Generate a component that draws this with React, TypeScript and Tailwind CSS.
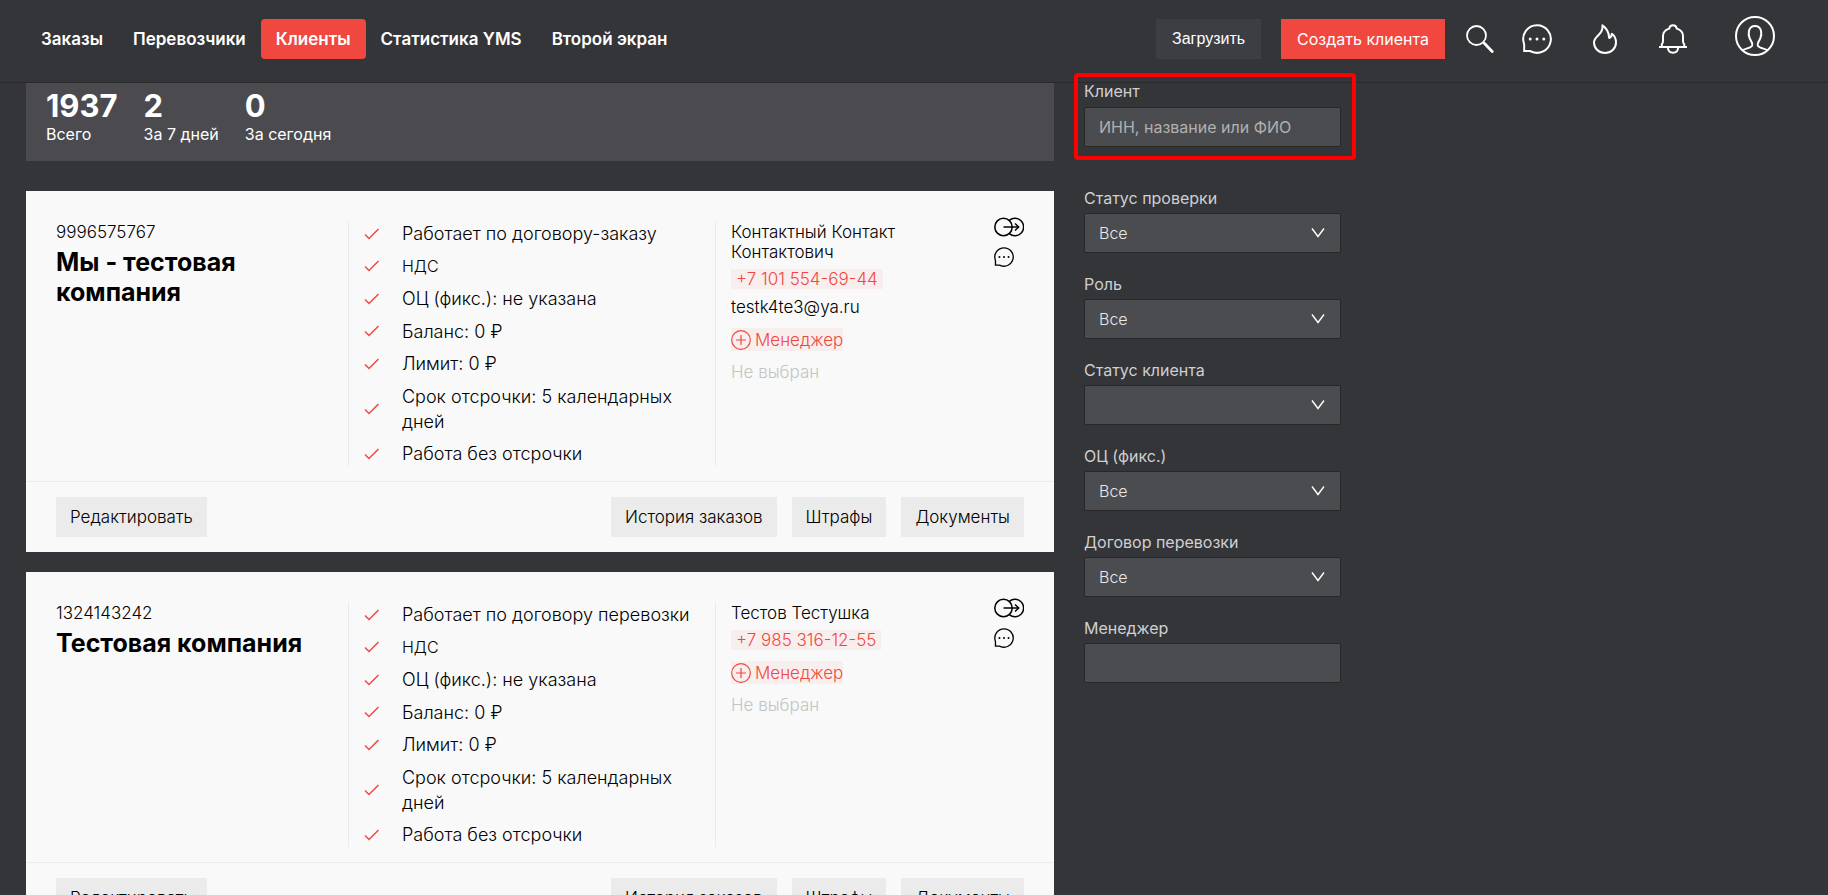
import { useState } from "react";
import type { ReactNode } from "react";

type Client = {
  inn: string;
  name: string;
  terms: string[];
  contact: string;
  phone: string;
  email?: string;
};

const navItems = [
  { label: "Заказы", href: "#orders" },
  { label: "Перевозчики", href: "#carriers" },
  { label: "Клиенты", href: "#clients" },
  { label: "Статистика YMS", href: "#yms" },
  { label: "Второй экран", href: "#screen" }
];

const stats = [
  { value: "1937", label: "Всего" },
  { value: "2", label: "За 7 дней" },
  { value: "0", label: "За сегодня" }
];

const commonTerms = [
  "НДС",
  "ОЦ (фикс.): не указана",
  "Баланс: 0 ₽",
  "Лимит: 0 ₽",
  "Срок отсрочки: 5 календарных дней",
  "Работа без отсрочки"
];

const clients: Client[] = [
  {
    inn: "9996575767",
    name: "Мы - тестовая компания",
    terms: ["Работает по договору-заказу", ...commonTerms],
    contact: "Контактный Контакт Контактович",
    phone: "+7 101 554-69-44",
    email: "testk4te3@ya.ru"
  },
  {
    inn: "1324143242",
    name: "Тестовая компания",
    terms: ["Работает по договору перевозки", ...commonTerms],
    contact: "Тестов Тестушка",
    phone: "+7 985 316-12-55"
  }
];

const filters = [
  { id: "check", label: "Статус проверки", value: "Все" },
  { id: "role", label: "Роль", value: "Все" },
  { id: "status", label: "Статус клиента", value: "" },
  { id: "fix", label: "ОЦ (фикс.)", value: "Все" },
  { id: "contract", label: "Договор перевозки", value: "Все" }
];

function SearchIcon() {
  return (
    <svg aria-hidden width="28" height="28" viewBox="0 0 28 28" fill="none" stroke="currentColor">
      <circle cx="10.5" cy="10.5" r="9.5" strokeWidth="1.8" />
      <path d="M17.2 17.2 19 19" strokeWidth="2" />
      <path d="m18.8 18.8 7.4 7.6" strokeWidth="2.8" strokeLinecap="round" />
    </svg>
  );
}

function ChatIcon({ size }: { size: number }) {
  return (
    <svg aria-hidden width={size} height={size} viewBox="0 0 30 30" fill="none">
      <path
        d="M15 1.2a13.8 13.8 0 1 1-5.8 26.3l-.9-.4H2.2V21l-.3-1.7A13.8 13.8 0 0 1 15 1.2Z"
        stroke="currentColor"
        strokeWidth="2"
      />
      <circle cx="8.2" cy="15" r="1.5" fill="currentColor" />
      <circle cx="15" cy="15" r="1.5" fill="currentColor" />
      <circle cx="21.8" cy="15" r="1.5" fill="currentColor" />
    </svg>
  );
}

function FlameIcon() {
  return (
    <svg aria-hidden width="26" height="30" viewBox="-1 0 26 30" fill="none">
      <path
        d="M9.4 1.4c.6 4.2-.8 6.6-3.6 9.4C3 13.4 1 15.5 1 18.6 1 24.5 6 29 12 29s11-4.5 11-10.4c0-3.6-1.4-6.8-4.2-8.8-.1 2.3-.8 3.8-2.6 4.3C16 9.5 14 4.4 9.4 1.4Z"
        stroke="currentColor"
        strokeWidth="2"
        strokeLinejoin="round"
      />
    </svg>
  );
}

function BellIcon() {
  return (
    <svg aria-hidden width="30" height="30" viewBox="0 0 30 30" fill="none" stroke="currentColor" strokeWidth="2">
      <path d="M1 23h28" />
      <path d="M3.8 22.5v-2.2c.8-.8 1.2-1.8 1.2-3.3V12c0-3.600 2.200-6.200 6.200-7.400.3-2 1.700-3.400 3.800-3.400s3.500 1.400 3.800 3.400C22.800 5.800 25 8.400 25 12v5c0 1.500.4 2.500 1.200 3.300v2.200" />
      <path d="M9.8 23.5c.3 3.3 2.4 5.3 5.2 5.3s4.9-2 5.2-5.3" />
    </svg>
  );
}

function UserIcon() {
  return (
    <svg aria-hidden width="40" height="40" viewBox="0 0 40 40" fill="none" stroke="currentColor" strokeWidth="2">
      <circle cx="20" cy="20" r="19" />
      <path d="M7.5 34.2c3-1.7 8.8-2.2 9.7-4.7.9-2.6-1.4-4.3-2.6-7.3-1.4-3.4-2-12.2 5.4-12.2s6.8 8.8 5.4 12.2c-1.2 3-3.5 4.7-2.6 7.3.9 2.5 6.7 3 9.7 4.7" />
    </svg>
  );
}

function TransferIcon() {
  return (
    <svg aria-hidden width="30" height="20" viewBox="0 0 30 20" fill="none" stroke="currentColor" strokeWidth="1.5">
      <circle cx="9.5" cy="10" r="8.7" />
      <path d="M15.3 3.4a8.7 8.7 0 1 1 0 13.2" />
      <path d="M9.5 10h15" />
      <path d="m21 6.5 3.7 3.5-3.7 3.5" />
    </svg>
  );
}

function CheckIcon() {
  return (
    <svg aria-hidden className="shrink-0 text-[#f0483f]" width="16" height="12" viewBox="0 0 16 12" fill="none">
      <path d="m1 6.5 4 4L14.5 1" stroke="currentColor" strokeWidth="1.5" />
    </svg>
  );
}

function PlusIcon() {
  return (
    <svg aria-hidden width="20" height="20" viewBox="0 0 20 20" fill="none" stroke="currentColor" strokeWidth="1.2">
      <circle cx="10" cy="10" r="9.3" />
      <path d="M10 5v10M5 10h10" />
    </svg>
  );
}

function IconButton({ label, children }: { label: string; children: ReactNode }) {
  return (
    <button aria-label={label} className="flex shrink-0 cursor-pointer" type="button">
      {children}
    </button>
  );
}

function CardButton({ children }: { children: ReactNode }) {
  return (
    <button
      className="h-10 cursor-pointer bg-[#ebebeb] px-3.5 pt-0.5 text-[17px] font-light hover:bg-[#e0e0e0]"
      type="button"
    >
      {children}
    </button>
  );
}

function Header() {
  const [active, setActive] = useState("#clients");

  return (
    <header className="flex h-[83px] shrink-0 items-start justify-between border-b border-[#2a2a2d] bg-[#343539] pt-[19px] pr-[53px] pl-[26px]">
      <nav aria-label="Основное меню" className="flex">
        {navItems.map((item) => (
          <a
            aria-current={active === item.href ? "page" : undefined}
            className={`flex h-10 items-center rounded px-[15px] pt-0.5 text-[17px] font-semibold whitespace-nowrap ${
              active === item.href ? "bg-[#f0483f]" : "hover:bg-white/5"
            }`}
            href={item.href}
            key={item.href}
            onClick={() => setActive(item.href)}
          >
            {item.label}
          </a>
        ))}
      </nav>

      <div className="flex h-10 items-center">
        <button
          className="h-10 cursor-pointer bg-[#3d3e43] px-4 font-['Liberation_Sans',Arial,sans-serif] text-base"
          type="button"
        >
          Загрузить
        </button>
        <button
          className="mr-[21px] ml-5 h-10 cursor-pointer bg-[#f0483f] px-4 text-base"
          type="button"
        >
          Создать клиента
        </button>
        <div className="flex items-center">
          <IconButton label="Поиск">
            <SearchIcon />
          </IconButton>
          <div className="ml-7 flex items-center gap-10">
            <IconButton label="Сообщения">
              <ChatIcon size={30} />
            </IconButton>
            <IconButton label="Горящие">
              <FlameIcon />
            </IconButton>
            <IconButton label="Уведомления">
              <BellIcon />
            </IconButton>
          </div>
          <div className="mb-1.5 ml-[47px]">
            <IconButton label="Профиль">
              <UserIcon />
            </IconButton>
          </div>
        </div>
      </div>
    </header>
  );
}

function ClientCard({ client }: { client: Client }) {
  return (
    <article className="bg-[#f9f9f9] text-black">
      <div className="grid grid-cols-[292fr_367fr_309fr] px-[30px] pt-[30px] pb-[15px]">
        <div className="pr-8">
          <p className="text-[17px] leading-[22px] font-light">{client.inn}</p>
          <h2 className="mt-1 text-[25px] leading-[30px] font-bold">{client.name}</h2>
        </div>

        <ul className="flex min-h-[245px] flex-col justify-between border-l border-[#ebebeb] pr-4 pl-[15px]">
          {client.terms.map((term) => (
            <li
              className={`flex items-center gap-[22px] font-light ${
                term === "НДС" ? "text-base/[25px]" : "text-lg/[25px]"
              }`}
              key={term}
            >
              <CheckIcon />
              <span>{term}</span>
            </li>
          ))}
        </ul>

        <div className="flex justify-between border-l border-[#ebebeb] pl-[15px]">
          <div className="w-[200px] pt-px text-[17px] leading-5 font-light">
            <p>{client.contact}</p>
            <p className="mt-[7px]">
              <a className="inline-block bg-[#f0483f]/6 px-[5px] text-[#f0483f]" href={`tel:${client.phone}`}>
                {client.phone}
              </a>
            </p>
            {client.email ? <p className="mt-2">{client.email}</p> : null}
            <button
              className="mt-[11px] flex h-[23px] cursor-pointer items-center gap-1 bg-[#f0483f]/6 text-[#f0483f]"
              type="button"
            >
              <PlusIcon />
              Менеджер
            </button>
            <p className="mt-[11px] text-[#c4c4c4]">Не выбран</p>
          </div>
          <div className="-mt-1 flex flex-col items-start gap-2.5">
            <IconButton label="Передать">
              <TransferIcon />
            </IconButton>
            <IconButton label="Комментарий">
              <ChatIcon size={20} />
            </IconButton>
          </div>
        </div>
      </div>

      <footer className="flex justify-between border-t border-[#ebebeb] px-[30px] py-[15px]">
        <CardButton>Редактировать</CardButton>
        <div className="flex gap-[15px]">
          <CardButton>История заказов</CardButton>
          <CardButton>Штрафы</CardButton>
          <CardButton>Документы</CardButton>
        </div>
      </footer>
    </article>
  );
}

function Filters() {
  return (
    <aside className="w-[257px] shrink-0 text-base text-[#cfcfd0]">
      <div className="relative mb-10">
        {/* highlight around the client search */}
        <div className="pointer-events-none absolute -top-2.5 -right-[15px] -bottom-[13px] -left-2.5 rounded-sm border-4 border-[#ff0000]" />
        <label className="flex h-6 items-center pb-2" htmlFor="client">
          Клиент
        </label>
        <input
          className="h-10 w-full rounded-xs border border-[#27272a] bg-[#4b4c4f] px-3.5 placeholder:text-[#b0b0b2]"
          id="client"
          placeholder="ИНН, название или ФИО"
          type="text"
        />
      </div>

      {filters.map((filter) => (
        <div className="mb-5" key={filter.id}>
          <label className="block h-[26px] leading-[22px]" htmlFor={filter.id}>
            {filter.label}
          </label>
          <div className="relative">
            <select
              className="h-10 w-full appearance-none rounded-xs border border-[#27272a] bg-[#4b4c4f] px-3.5 font-light text-[#e8e8e8]"
              defaultValue={filter.value}
              id={filter.id}
            >
              <option value={filter.value}>{filter.value}</option>
            </select>
            <svg
              aria-hidden
              className="pointer-events-none absolute top-[15px] right-4 text-white"
              width="14"
              height="10"
              viewBox="0 0 14 10"
              fill="none"
            >
              <path d="m1 .5 6 8 6-8" stroke="currentColor" strokeWidth="1.4" />
            </svg>
          </div>
        </div>
      ))}

      <label className="block h-[26px] leading-[22px]" htmlFor="manager">
        Менеджер
      </label>
      <input
        className="h-10 w-full rounded-xs border border-[#27272a] bg-[#4b4c4f] px-3.5"
        id="manager"
        type="text"
      />
    </aside>
  );
}

export default function App() {
  return (
    <div className="flex h-screen flex-col overflow-hidden bg-[#343539] font-[Inter,sans-serif] text-white">
      <Header />
      <div className="flex max-w-[1341px] items-start gap-[30px] pl-[26px]">
        <main className="min-w-0 flex-1">
          <dl className="flex bg-[#4b4b4f] px-5 pt-1.5 pb-4">
            {stats.map((stat) => (
              <div className="mr-[26px] flex flex-col-reverse" key={stat.label}>
                <dt className="text-base leading-[22px]">{stat.label}</dt>
                <dd className="text-[31px] leading-[34px] font-bold">{stat.value}</dd>
              </div>
            ))}
          </dl>
          <div className="mt-[30px] flex flex-col gap-5">
            {clients.map((client) => (
              <ClientCard client={client} key={client.inn} />
            ))}
          </div>
        </main>
        <Filters />
      </div>
    </div>
  );
}
